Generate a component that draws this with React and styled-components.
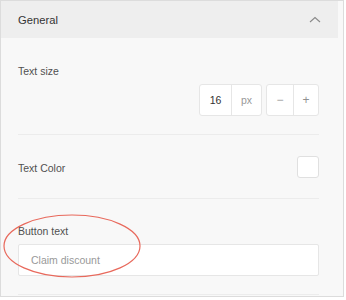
import React from "react";
import styled, { createGlobalStyle } from "styled-components";

const Global = createGlobalStyle`
  html, body { margin: 0; padding: 0; background: #ffffff; }
  body { font-family: "Liberation Sans", Arial, sans-serif; }
  * { box-sizing: border-box; }
`;

const Frame = styled.div`
  position: relative;
  width: 344px;
  height: 297px;
  border: 1px solid #dcdcdc;
  background: #f8f8f8;
  overflow: hidden;
`;

const Panel = styled.div`
  width: 337px;
  display: flex;
  flex-direction: column;
`;

const Header = styled.div`
  height: 37px;
  background: #eeeeee;
  display: flex;
  align-items: center;
  justify-content: space-between;
  padding: 0 17px 0 17px;
`;

const Title = styled.span`
  font-size: 11.2px;
  font-weight: 500;
  color: #333333;
  letter-spacing: 0.05px;
`;

const Body = styled.div`
  padding: 0 19px 0 17px;
  display: flex;
  flex-direction: column;
`;

const Section = styled.div`
  display: flex;
  flex-direction: ${(p) => (p.$row ? "row" : "column")};
  align-items: ${(p) => (p.$row ? "center" : "stretch")};
  justify-content: ${(p) => (p.$row ? "space-between" : "flex-start")};
  gap: 6px;
  padding: ${(p) => p.$pad};
  border-bottom: 1px solid #ececec;
`;

const Label = styled.span`
  font-size: 10.5px;
  line-height: 14px;
  color: #505050;
  padding-top: ${(p) => p.$nudge || 0}px;
`;

const Controls = styled.div`
  display: flex;
  justify-content: flex-end;
  gap: 4px;
`;

const Group = styled.div`
  display: flex;
  height: 32px;
  border: 1px solid #e6e6e6;
  border-radius: 3px;
  background: #ffffff;
  overflow: hidden;
`;

const Cell = styled.div`
  width: ${(p) => p.$w}px;
  display: flex;
  align-items: center;
  justify-content: center;
  font-size: ${(p) => p.$size || 10.5}px;
  color: ${(p) => p.$color || "#333"};
  & + & { border-left: 1px solid #e6e6e6; }
`;

const Swatch = styled.div`
  width: 22px;
  height: 22px;
  border: 1px solid #e0e0e0;
  border-radius: 3px;
  background: #ffffff;
`;

const TextInput = styled.div`
  height: 32px;
  border: 1px solid #e6e6e6;
  border-radius: 2px;
  background: #ffffff;
  display: flex;
  align-items: center;
  padding-left: 12px;
  font-size: 10.5px;
  color: #999999;
`;

const Annotation = styled.svg`
  position: absolute;
  left: 0;
  top: 210px;
  pointer-events: none;
`;

function Chevron() {
  return (
    <svg width="12" height="7" viewBox="0 0 12 7">
      <polyline points="1,6 6,1.5 11,6" fill="none" stroke="#8a8a8a" strokeWidth="1.1" />
    </svg>
  );
}

export default function App() {
  return (
    <>
      <Global />
      <Frame>
        <Panel>
          <Header>
            <Title>General</Title>
            <Chevron />
          </Header>
          <Body>
            <Section $pad="26px 0 18px">
              <Label>Text size</Label>
              <Controls>
                <Group>
                  <Cell $w={31}>16</Cell>
                  <Cell $w={30} $color="#999">px</Cell>
                </Group>
                <Group>
                  <Cell $w={26} $color="#a0a0a0" $size={12}>−</Cell>
                  <Cell $w={25} $color="#909090" $size={12}>+</Cell>
                </Group>
              </Controls>
            </Section>
            <Section $row $pad="21px 0 20px">
              <Label $nudge={2}>Text Color</Label>
              <Swatch />
            </Section>
            <Section $pad="25px 0 18px">
              <Label>Button text</Label>
              <TextInput>Claim discount</TextInput>
            </Section>
          </Body>
        </Panel>
        <Annotation width="150" height="72" viewBox="0 0 150 72">
          <ellipse cx="71" cy="35" rx="68" ry="31" fill="none" stroke="#e8695c" strokeWidth="1.2" />
        </Annotation>
      </Frame>
    </>
  );
}
